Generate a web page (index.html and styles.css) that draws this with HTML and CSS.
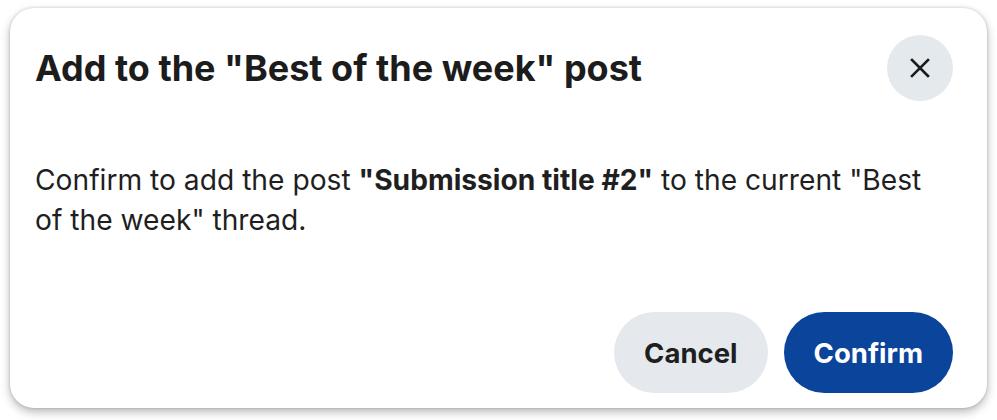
FILE: index.html
```html
<!DOCTYPE html>
<html lang="en">
<head>
<meta charset="utf-8">
<title>Add to Best of the week</title>
<link rel="stylesheet" href="styles.css">
</head>
<body>
<div class="modal" role="dialog" aria-labelledby="dlg-title">
  <div class="modal-header">
    <h2 id="dlg-title" class="modal-title">Add to the "Best of the week" post</h2>
    <button class="close-btn" aria-label="Close">
      <svg width="20" height="20" viewBox="0 0 20 20" aria-hidden="true">
        <path d="M2 2 L18 18 M18 2 L2 18" stroke="#1c1c1c" stroke-width="2.6" stroke-linecap="square" fill="none"/>
      </svg>
    </button>
  </div>
  <p class="modal-body">Confirm to add the post <strong>"Submission title #2"</strong> to the current "Best of the week" thread.</p>
  <div class="modal-footer">
    <button class="btn btn-secondary">Cancel</button>
    <button class="btn btn-primary">Confirm</button>
  </div>
</div>
</body>
</html>
```
FILE: styles.css
```css
* { box-sizing: border-box; }
html, body { margin: 0; background: #ffffff; }
body {
  padding: 8px 10px 12px 10px;
  font-family: Inter, "Noto Sans", "Liberation Sans", sans-serif;
  color: #1f1f1f;
}
.modal {
  width: 977px;
  height: 400px;
  background: #ffffff;
  border-radius: 24px;
  box-shadow: 0 4px 10px rgba(0,0,0,0.28), 0 0 3px rgba(0,0,0,0.18);
  padding: 27px 34px 15px 25px;
  display: flex;
  flex-direction: column;
}
.modal-header {
  display: flex;
  align-items: center;
  justify-content: space-between;
}
.modal-title {
  margin: 0;
  font-size: 36px;
  font-weight: 700;
  color: #1c1c1c;
}
.close-btn {
  width: 66px;
  height: 66px;
  flex: none;
  border-radius: 50%;
  border: 0;
  background: #e4e9ee;
  display: flex;
  align-items: center;
  justify-content: center;
  padding: 0;
}
.modal-body {
  margin: 59px 0 0 0;
  max-width: 900px;
  font-size: 28.2px;
  line-height: 40px;
  color: #1f1f1f;
}
.modal-body strong { font-weight: 700; }
.modal-footer {
  margin-top: auto;
  display: flex;
  justify-content: flex-end;
  gap: 16px;
}
.btn {
  height: 81px;
  border: 0;
  border-radius: 41px;
  font-family: inherit;
  font-size: 27.5px;
  font-weight: 700;
  padding: 0 30px;
}
.btn-secondary { background: #e5e9ee; color: #1f1f1f; }
.btn-primary { background: #0a449b; color: #ffffff; }
```
